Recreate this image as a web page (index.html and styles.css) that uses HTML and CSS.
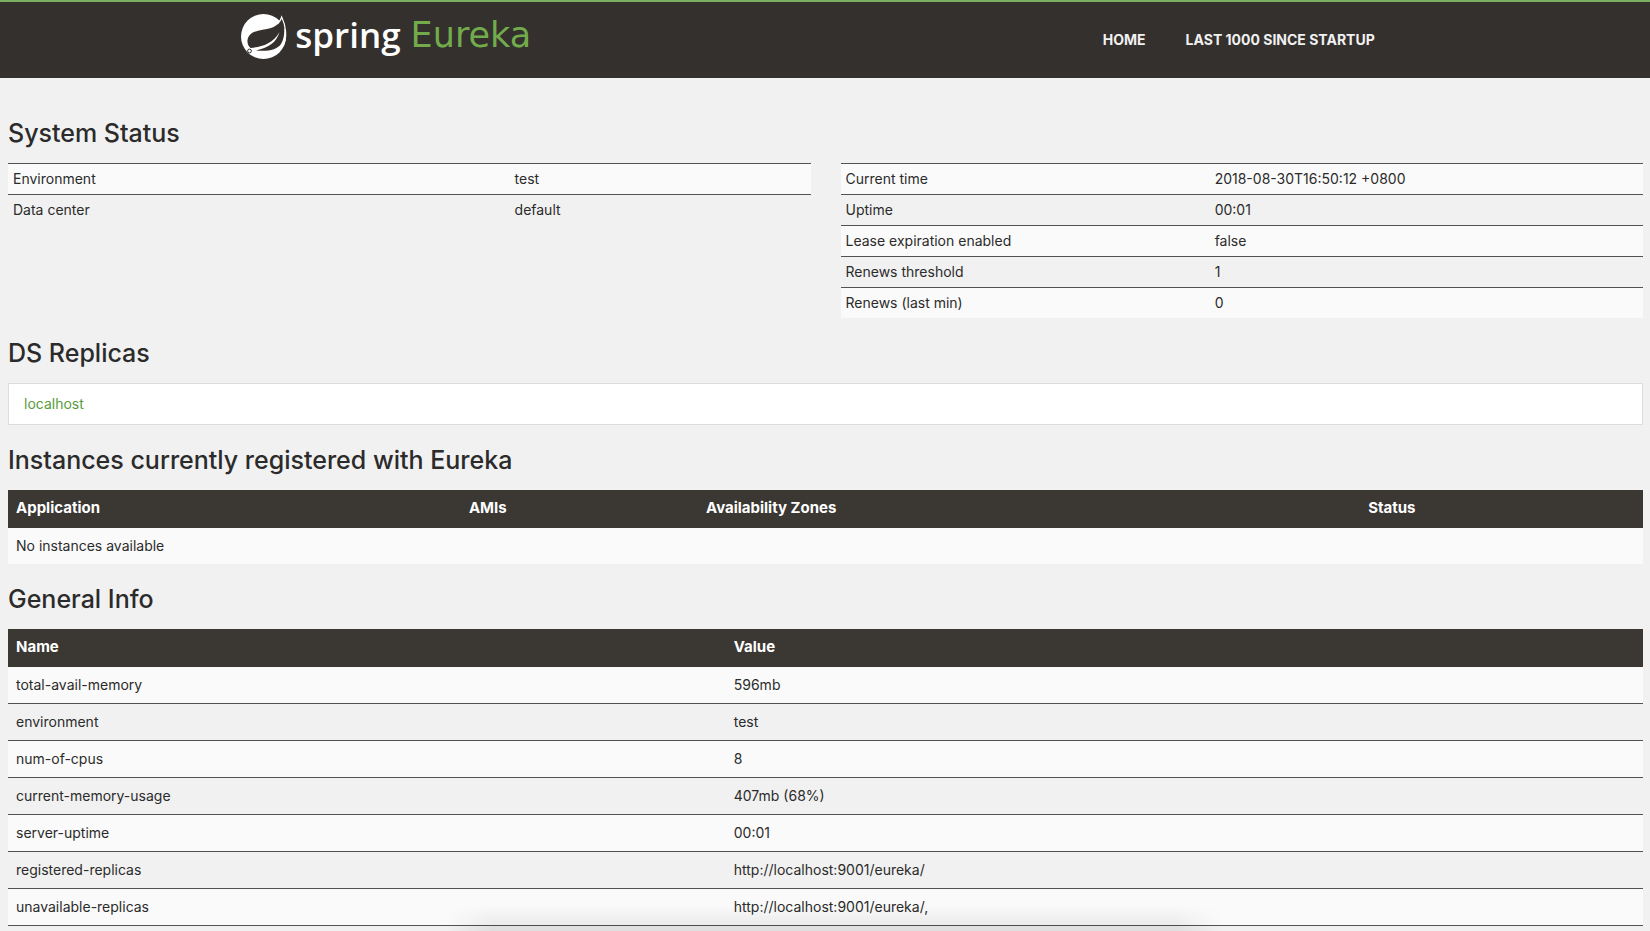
FILE: index.html
```html
<!DOCTYPE html>
<html lang="en">
<head>
<meta charset="utf-8">
<title>Eureka</title>
<link rel="stylesheet" href="styles.css">
</head>
<body>
<header class="navbar">
  <div class="navbar-inner">
    <a class="brand" href="#" aria-label="spring Eureka">
      <svg class="brand-mark" viewBox="0 0 46 46" aria-hidden="true">
        <circle cx="22.500" cy="23.500" r="22.500" fill="#fff"/>
        <path d="M40.500 4C38.500 10 36 13 30 15C23 17 12 17 8 23C5.500 27 6 32 9.500 35C20 34 32 31 38.500 19C35.500 30 27 34.500 15 37.500C27 38.500 36 37 40 31C45 23 43.500 12 40.500 4Z" fill="#34302d"/>
        <path d="M36.500 11C39 8.500 40 6.500 40.700 4C44.500 12 47 24 41.500 34" fill="none" stroke="#fff" stroke-width="1.200"/>
        <circle cx="8.500" cy="38" r="1.900" fill="#fff" stroke="#34302d" stroke-width="1"/>
      </svg>
      <span class="brand-spring">spring</span>
      <span class="brand-eureka">Eureka</span>
    </a>
    <nav class="nav">
      <a href="#">Home</a>
      <a href="#">Last 1000 since startup</a>
    </nav>
  </div>
</header>
<main class="content">
  <h1>System Status</h1>
  <div class="status-row">
    <table class="table compact env">
      <tbody>
        <tr><td>Environment</td><td>test</td></tr>
        <tr><td>Data center</td><td>default</td></tr>
      </tbody>
    </table>
    <table class="table compact runtime">
      <tbody>
        <tr><td>Current time</td><td>2018-08-30T16:50:12 +0800</td></tr>
        <tr><td>Uptime</td><td>00:01</td></tr>
        <tr><td>Lease expiration enabled</td><td>false</td></tr>
        <tr><td>Renews threshold</td><td>1</td></tr>
        <tr><td>Renews (last min)</td><td>0</td></tr>
      </tbody>
    </table>
  </div>
  <h1>DS Replicas</h1>
  <ul class="replicas">
    <li><a href="#">localhost</a></li>
  </ul>
  <h1>Instances currently registered with Eureka</h1>
  <table class="table instances">
    <thead>
      <tr><th>Application</th><th>AMIs</th><th>Availability Zones</th><th>Status</th></tr>
    </thead>
    <tbody>
      <tr><td colspan="4">No instances available</td></tr>
    </tbody>
  </table>
  <h1>General Info</h1>
  <table class="table info">
    <thead>
      <tr><th>Name</th><th>Value</th></tr>
    </thead>
    <tbody>
      <tr><td>total-avail-memory</td><td>596mb</td></tr>
      <tr><td>environment</td><td>test</td></tr>
      <tr><td>num-of-cpus</td><td>8</td></tr>
      <tr><td>current-memory-usage</td><td>407mb (68%)</td></tr>
      <tr><td>server-uptime</td><td>00:01</td></tr>
      <tr><td>registered-replicas</td><td>http://localhost:9001/eureka/</td></tr>
      <tr><td>unavailable-replicas</td><td>http://localhost:9001/eureka/,</td></tr>
    </tbody>
  </table>
</main>
<div class="bottom-shadow" aria-hidden="true"></div>
</body>
</html>
```
FILE: styles.css
```css
* {
  box-sizing: border-box;
}

body {
  margin: 0;
  background: #f1f1f1;
  color: #2b2b2b;
  font: 14px/20px Inter, "Open Sans", sans-serif;
}

a {
  text-decoration: none;
}

.navbar {
  height: 78px;
  background: #34302d;
  border-top: 2px solid #7bb061;
}

.navbar-inner {
  display: flex;
  justify-content: space-between;
  width: 71%;
  margin: 0 auto;
  padding: 0 36px 0 2px;
}

.brand {
  display: flex;
  align-items: flex-start;
  padding-top: 11px;
  font-size: 35px;
  line-height: 44px;
}

.brand-mark {
  width: 46px;
  height: 46px;
  margin-right: 8px;
}

.brand-spring {
  margin-right: 10px;
  color: #fff;
  font-family: "Open Sans", sans-serif;
  font-weight: 600;
}

.brand-eureka {
  color: #72ab4c;
  font-family: "DejaVu Sans", sans-serif;
}

.nav {
  display: flex;
  gap: 40px;
  padding-top: 28px;
}

.nav a {
  color: #f1f1f1;
  font-size: 14px;
  font-weight: 700;
  text-transform: uppercase;
}

.content {
  padding: 36px 7px 0 8px;
}

h1 {
  margin: 0;
  padding: 20px 0 15px;
  font-size: 25px;
  font-weight: 500;
  line-height: 30px;
}

.content h1:first-child {
  padding-top: 4px;
}

.status-row {
  display: grid;
  grid-template-columns: 1fr 1fr;
  align-items: start;
  gap: 30px;
}

.table {
  width: 100%;
  table-layout: fixed;
  border-collapse: separate;
  border-spacing: 0;
}

.table th,
.table td {
  padding: 8px;
  text-align: left;
}

.table th {
  padding-bottom: 10px;
  background: #3b3733;
  color: #fff;
  font-size: 15px;
  font-weight: 700;
}

.table td {
  border-top: 1px solid #54514f;
}

.table thead + tbody tr:first-child td {
  border-top: 0;
}

.table tbody tr:nth-child(odd) {
  background: #fafafa;
}

.compact td {
  padding: 5px;
}

.env td:first-child {
  width: 62.5%;
}

.runtime td:first-child {
  width: 46%;
}

.instances th:nth-child(1) {
  width: 27.7%;
}

.instances th:nth-child(2) {
  width: 14.5%;
}

.instances th:nth-child(3) {
  width: 40.5%;
}

.info th:first-child {
  width: 43.9%;
}

.info tbody tr:last-child td {
  border-bottom: 1px solid #54514f;
}

.replicas {
  margin: 0;
  padding: 10px 15px;
  background: #fff;
  border: 1px solid #ddd;
  list-style: none;
}

.replicas a {
  color: #5a9c3a;
}

.bottom-shadow {
  position: fixed;
  bottom: 0;
  left: 27%;
  width: 47%;
  height: 26px;
  background: linear-gradient(rgba(0, 0, 0, 0), rgba(0, 0, 0, .08));
  -webkit-mask-image: linear-gradient(to right, transparent, #000 6%, #000 94%, transparent);
  mask-image: linear-gradient(to right, transparent, #000 6%, #000 94%, transparent);
  pointer-events: none;
}
```
